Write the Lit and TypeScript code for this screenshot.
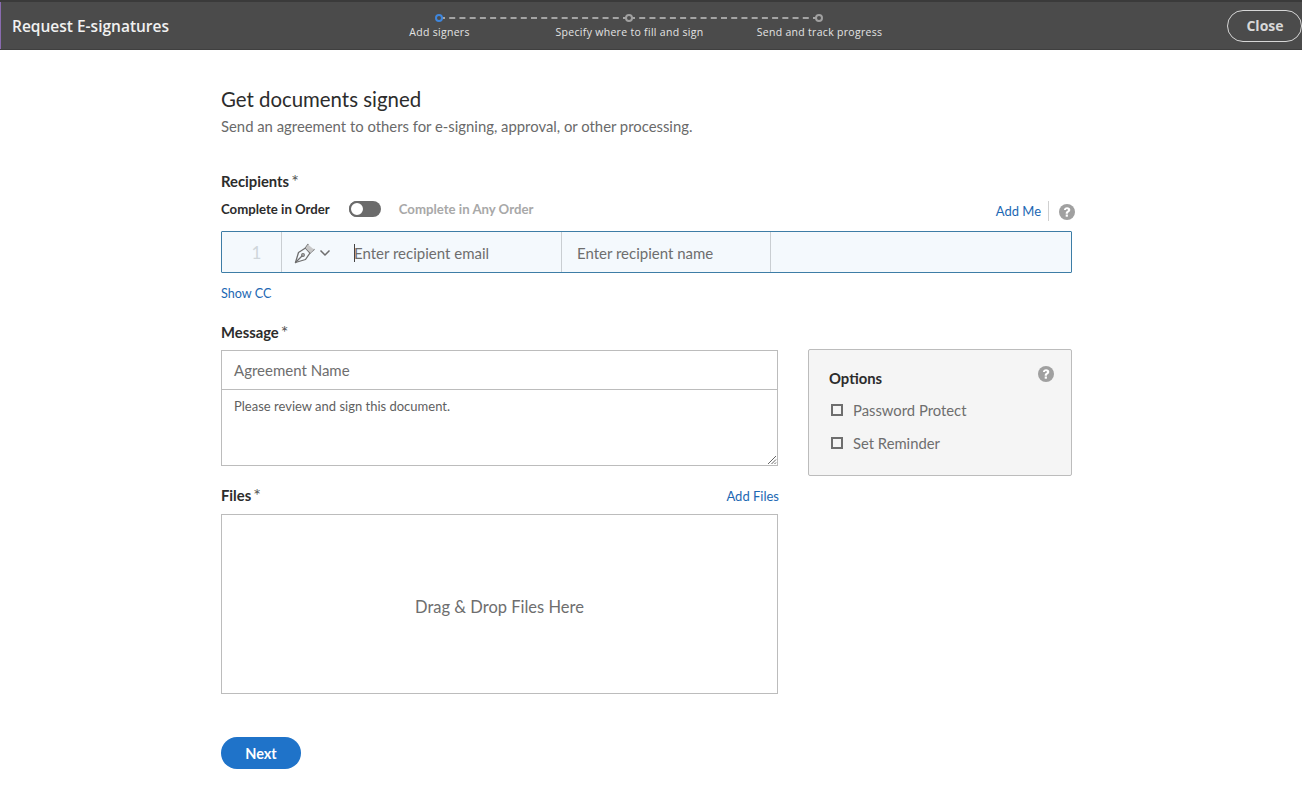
import { LitElement, html, css } from "lit";
import { customElement } from "lit/decorators.js";

const help = html`<svg class="help" viewBox="0 0 16 16" width="16" height="16"><circle cx="8" cy="8" r="8" fill="#a0a0a0"/><path d="M4.900 6C5 4.300 6.300 3.200 8.100 3.200c1.900 0 3.200 1 3.200 2.600 0 1.100-.6 1.800-1.500 2.400-.7.5-.9.8-.9 1.500H6.700c0-1.300.4-2 1.300-2.600.6-.4.9-.7.9-1.200 0-.5-.4-.8-.9-.8-.6 0-1 .4-1.100 1z" fill="#fff"/><rect x="6.700" y="10.500" width="2.200" height="2.200" fill="#fff"/></svg>`;

@customElement("app-root")
export class AppRoot extends LitElement {
  static styles = css`
    :host { display: block; width: 1302px; height: 802px; overflow: hidden; background: #fff; font-family: "Lato", "Noto Sans", sans-serif; color: #2c2c2c; }
    * { box-sizing: border-box; }
    .top { height: 50px; background: #4b4b4b; border-top: 2px solid #3a3a3a; border-bottom: 1px solid #3f3f3f; display: grid; grid-template-columns: 344px 570px 1fr; align-items: stretch; }
    .brand { border-left: 1px solid #8a6bb0; padding: 13px 0 0 11px; font: 600 15.500px/22px "Open Sans", sans-serif; color: #f1f1f1; }
    .steps { display: grid; grid-template-columns: repeat(3, 190px); }
    .step { position: relative; display: flex; flex-direction: column; align-items: center; padding-top: 12px; padding-left: 1px; font: 400 10.500px/14px "Open Sans", sans-serif; letter-spacing: .3px; color: #e3e3e3; white-space: nowrap; }
    .dot { width: 8px; height: 8px; border-radius: 50%; border: 2px solid #a0a0a0; background: #4b4b4b; margin: 0 1px 3px 0; position: relative; z-index: 1; }
    .dot.on { border-color: #3f86dc; }
    .step:not(:last-child)::after { content: ""; position: absolute; left: 50%; width: 100%; top: 15px; border-top: 2px dashed #a4a4a4; }
    .close-wrap { display: flex; justify-content: flex-end; padding-top: 8px; }
    .close { width: 75px; height: 32px; border: 1px solid #d6d6d6; border-radius: 16px; background: transparent; color: #d8d8d8; font: 700 14px/28px "Open Sans", sans-serif; padding: 0 0 0 1px; }
    .main { width: 851px; margin-left: 221px; padding-top: 35px; }
    h1 { margin: 0; font: 400 20.400px/28px "Lato", sans-serif; color: #2c2c2c; }
    .sub { font-size: 14.850px; line-height: 20px; margin-top: 3px; color: #6a6a6a; }
    .label { font-size: 14.800px; font-weight: 700; line-height: 20px; height: 20px; color: #2c2c2c; }
    .label span { font-weight: 400; color: #555; margin-left: 2px; font-size: 18px; line-height: 0; vertical-align: -1px; }
    .recip-label { margin-top: 35px; }
    .order { display: flex; align-items: center; height: 24px; margin-top: 6px; font-size: 13.200px; font-weight: 700; }
    .toggle { width: 32px; height: 16px; border-radius: 8px; background: #6b6b6b; margin: 0 18px 0 19px; display: flex; }
    .knob { width: 16px; height: 16px; border-radius: 50%; background: #fff; border: 2px solid #6b6b6b; }
    .any { color: #a8a8a8; }
    .right { margin-left: auto; margin-right: -3px; display: flex; align-items: center; color: #1c68b3; font-size: 13px; font-weight: 400; padding-top: 4px; }
    .right .sep { width: 1px; height: 20px; background: #d0d0d0; margin: 0 10px 0 7px; }
    .right .help { margin-top: 2px; }
    .recip { height: 42px; margin-top: 10px; display: flex; background: #f4f9fd; border: 1px solid #3d7da6; border-radius: 1px; font-size: 15px; color: #6e6e6e; }
    .cell { display: flex; align-items: center; border-right: 1px solid #c9ced2; }
    .num { width: 60px; justify-content: center; color: #cfd6da; font-size: 17px; padding-left: 10px; padding-top: 1px; }
    .email { width: 280px; padding-left: 12px; padding-top: 1px; gap: 23px; }
    .caret { width: 1px; height: 18px; background: #444; margin-right: -1px; }
    .pen { display: flex; align-items: center; gap: 3px; width: 37px; }
    .email-text { display: flex; align-items: center; }
    .name { width: 209px; padding-left: 15px; padding-top: 1px; }
    .link { color: #1c68b3; font-size: 13px; line-height: 18px; }
    .cc { margin-top: 12px; font-size: 12.600px; }
    .msg-label { margin-top: 19px; }
    .grid { display: grid; grid-template-columns: 557px 264px; gap: 30px; margin-top: 8px; align-items: start; }
    .box { border: 1px solid #bcbcbc; }
    .agree { height: 39px; border-bottom: 1px solid #bcbcbc; padding: 0 12px; display: flex; align-items: center; font-size: 15px; color: #6e6e6e; }
    .area { height: 75px; padding: 8px 12px; font-size: 13px; line-height: 17px; color: #5f5f5f; position: relative; }
    .grip { position: absolute; right: 0; bottom: 0; }
    .files-head { display: flex; justify-content: space-between; align-items: center; height: 20px; margin-top: 19px; }
    .files-head .link { margin-right: -1px; padding-top: 2px; }
    .drop { height: 180px; margin-top: 9px; border: 1px solid #bcbcbc; display: flex; align-items: center; justify-content: center; font-size: 16.500px; color: #6e6e6e; padding-top: 6px; }
    .next { display: block; width: 80px; height: 32px; margin-top: 43px; border: 0; border-radius: 16px; background: #1f73c9; color: #fff; font: 700 14.500px/32px "Lato", sans-serif; padding: 1px 0 0; }
    .opts { height: 127px; margin-top: -1px; background: #f5f5f5; border: 1px solid #bcbcbc; border-radius: 2px; padding: 16px 17px 0 20px; }
    .opts-head { display: flex; justify-content: space-between; align-items: flex-start; height: 24px; }
    .opts-title { font-size: 14.800px; font-weight: 700; line-height: 24px; color: #2c2c2c; }
    .opt { display: flex; align-items: center; height: 33px; font-size: 14.800px; color: #6e6e6e; }
    .opt i { width: 12px; height: 12px; border: 2px solid #6e6e6e; margin: 0 10px 0 2px; }
    .opt.first { margin-top: 3px; }
  `;

  render() {
    return html`
      <header class="top">
        <div class="brand">Request E-signatures</div>
        <div class="steps">
          <div class="step"><span class="dot on"></span>Add signers</div>
          <div class="step"><span class="dot"></span>Specify where to fill and sign</div>
          <div class="step"><span class="dot"></span>Send and track progress</div>
        </div>
        <div class="close-wrap"><button class="close">Close</button></div>
      </header>
      <main class="main">
        <h1>Get documents signed</h1>
        <div class="sub">Send an agreement to others for e-signing, approval, or other processing.</div>
        <div class="label recip-label">Recipients<span>*</span></div>
        <div class="order">
          <span>Complete in Order</span>
          <span class="toggle"><span class="knob"></span></span>
          <span class="any">Complete in Any Order</span>
          <span class="right">Add Me<span class="sep"></span>${help}</span>
        </div>
        <div class="recip">
          <div class="cell num">1</div>
          <div class="cell email">
            <span class="pen">
              <svg width="22" height="22" viewBox="0 0 22 22" fill="none" stroke="#6e6e6e" stroke-width="1.300" stroke-linejoin="round" stroke-linecap="round"><path d="M1.500 20.500 4.500 10.500l7-4.500 4.500 5-4.500 6.500z"/><path d="M1.500 20.500 8 14"/><circle cx="9" cy="13" r="1.300"/><path d="M11.500 6l2.500-3.500"/><path d="M16 11l4-3.500"/><path d="M14 2.500 20 7.500 16.500 11 11.500 6z" fill="#c8c8c8" stroke="none"/></svg>
              <svg width="12" height="8" viewBox="0 0 12 8" fill="none" stroke="#6e6e6e" stroke-width="1.500"><path d="M1.500 1.500 6 6l4.500-4.500"/></svg>
            </span>
            <span class="email-text"><span class="caret"></span>Enter recipient email</span>
          </div>
          <div class="cell name">Enter recipient name</div>
        </div>
        <div class="link cc">Show CC</div>
        <div class="label msg-label">Message<span>*</span></div>
        <div class="grid">
          <div>
            <div class="box">
              <div class="agree">Agreement Name</div>
              <div class="area">Please review and sign this document.
                <svg class="grip" width="10" height="10" viewBox="0 0 10 10" stroke="#666" stroke-width="1"><path d="M9 1 1 9M9 4.500 4.500 9M9 7.500 7.500 9"/></svg>
              </div>
            </div>
            <div class="files-head"><span class="label">Files<span>*</span></span><span class="link">Add Files</span></div>
            <div class="drop">Drag &amp; Drop Files Here</div>
            <button class="next">Next</button>
          </div>
          <aside class="opts">
            <div class="opts-head"><span class="opts-title">Options</span>${help}</div>
            <div class="opt first"><i></i>Password Protect</div>
            <div class="opt"><i></i>Set Reminder</div>
          </aside>
        </div>
      </main>
    `;
  }
}
